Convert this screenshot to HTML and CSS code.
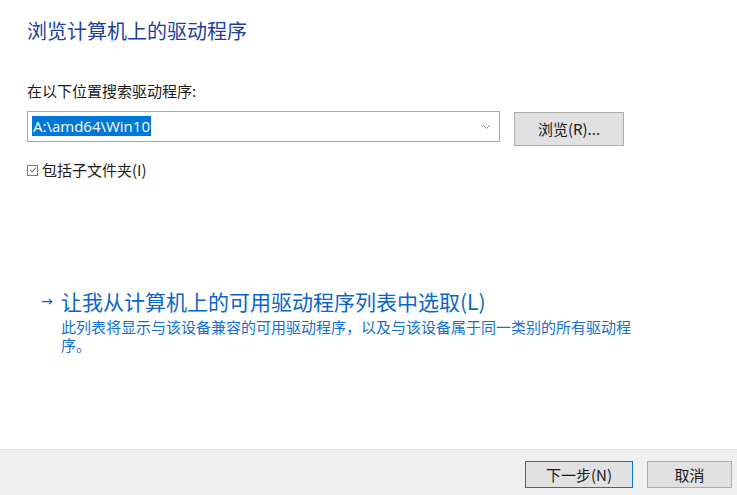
FILE: index.html
```html
<!DOCTYPE html>
<html lang="zh-CN">
<head>
<meta charset="utf-8">
<title>浏览计算机上的驱动程序</title>
<link rel="stylesheet" href="styles.css">
</head>
<body>
<div class="page">
  <main class="content">
    <h1 class="title">浏览计算机上的驱动程序</h1>
    <div class="label">在以下位置搜索驱动程序:</div>
    <div class="path-row">
      <div class="combo">
        <span class="combo-text"><span class="sel">A:\amd64\Win10</span></span>
        <svg class="chev" width="9" height="6" viewBox="0 0 9 6"><path d="M1 1 L4.5 4.5 L8 1" fill="none" stroke="#8a8a8a" stroke-width="1"/></svg>
      </div>
      <button class="btn browse">浏览(R)...</button>
    </div>
    <label class="check-row">
      <span class="checkbox"><svg width="8" height="8" viewBox="0 0 8 8"><path d="M1 4 L3 6.2 L7 1.5" fill="none" stroke="#555" stroke-width="1"/></svg></span>
      <span>包括子文件夹(I)</span>
    </label>
    <div class="cmdlink">
      <span class="arrow">→</span>
      <div class="cmd-body">
        <div class="cmd-title">让我从计算机上的可用驱动程序列表中选取(L)</div>
        <div class="cmd-desc">此列表将显示与该设备兼容的可用驱动程序，以及与该设备属于同一类别的所有驱动程序。</div>
      </div>
    </div>
  </main>
  <footer class="footer">
    <button class="btn next">下一步(N)</button>
    <button class="btn cancel">取消</button>
  </footer>
</div>
</body>
</html>
```
FILE: styles.css
```css
* { box-sizing: border-box; }
html, body {
  margin: 0;
  padding: 0;
  background: #fff;
}
body {
  font-family: "Noto Sans CJK SC", "Noto Sans", sans-serif;
  font-size: 15px;
  color: #1a1a1a;
}
.page {
  width: 737px;
  height: 495px;
  display: flex;
  flex-direction: column;
}
.content {
  flex: 1;
  padding: 17px 0 0 27px;
}
.title {
  margin: 0;
  font-size: 20px;
  font-weight: normal;
  line-height: 28px;
  color: #1c3f9f;
}
.label {
  margin-top: 36px;
  line-height: 20px;
}
.path-row {
  display: flex;
  align-items: flex-start;
  margin-top: 10px;
}
.combo {
  width: 473px;
  height: 31px;
  border: 1px solid #7eb4ea;
  display: flex;
  align-items: center;
  justify-content: space-between;
  padding: 0 8px 0 4px;
}
.combo-text {
  font-family: "Open Sans", "Noto Sans", sans-serif;
  font-size: 15px;
  line-height: 19px;
}
.sel {
  background: #0078d7;
  color: #fff;
  padding: 0 1px;
}
.chev { margin-top: 1px; }
.btn {
  font-family: "Noto Sans CJK SC", sans-serif;
  font-size: 15px;
  color: #1a1a1a;
  background: #e1e1e1;
  border: 1px solid #adadad;
  padding: 0;
  line-height: 20px;
}
.browse {
  width: 110px;
  height: 34px;
  margin: 1px 0 0 14px;
}
.check-row {
  display: flex;
  align-items: center;
  gap: 4px;
  margin-top: 14px;
  line-height: 20px;
}
.checkbox {
  width: 11px;
  height: 11px;
  border: 1px solid #7a7a7a;
  display: flex;
  align-items: center;
  justify-content: center;
  background: #fff;
}
.cmdlink {
  display: flex;
  margin-top: 108px;
  color: #0a66c8;
}
.arrow {
  width: 34px;
  padding-left: 14px;
  font-size: 14px;
  line-height: 26px;
  font-family: "DejaVu Sans", sans-serif;
}
.cmd-title {
  font-size: 21px;
  line-height: 26px;
  color: #0a66c8;
}
.cmd-desc {
  width: 580px;
  font-size: 15px;
  line-height: 18px;
  margin-top: 4px;
  color: #1570d0;
}
.footer {
  height: 46px;
  background: #f0f0f0;
  border-top: 1px solid #e2e2e2;
  display: flex;
  justify-content: flex-end;
  align-items: flex-start;
  padding: 11px 5px 0 0;
  gap: 14px;
}
.next {
  width: 108px;
  height: 27px;
  border-color: #0078d7;
}
.cancel {
  width: 85px;
  height: 27px;
}
```
